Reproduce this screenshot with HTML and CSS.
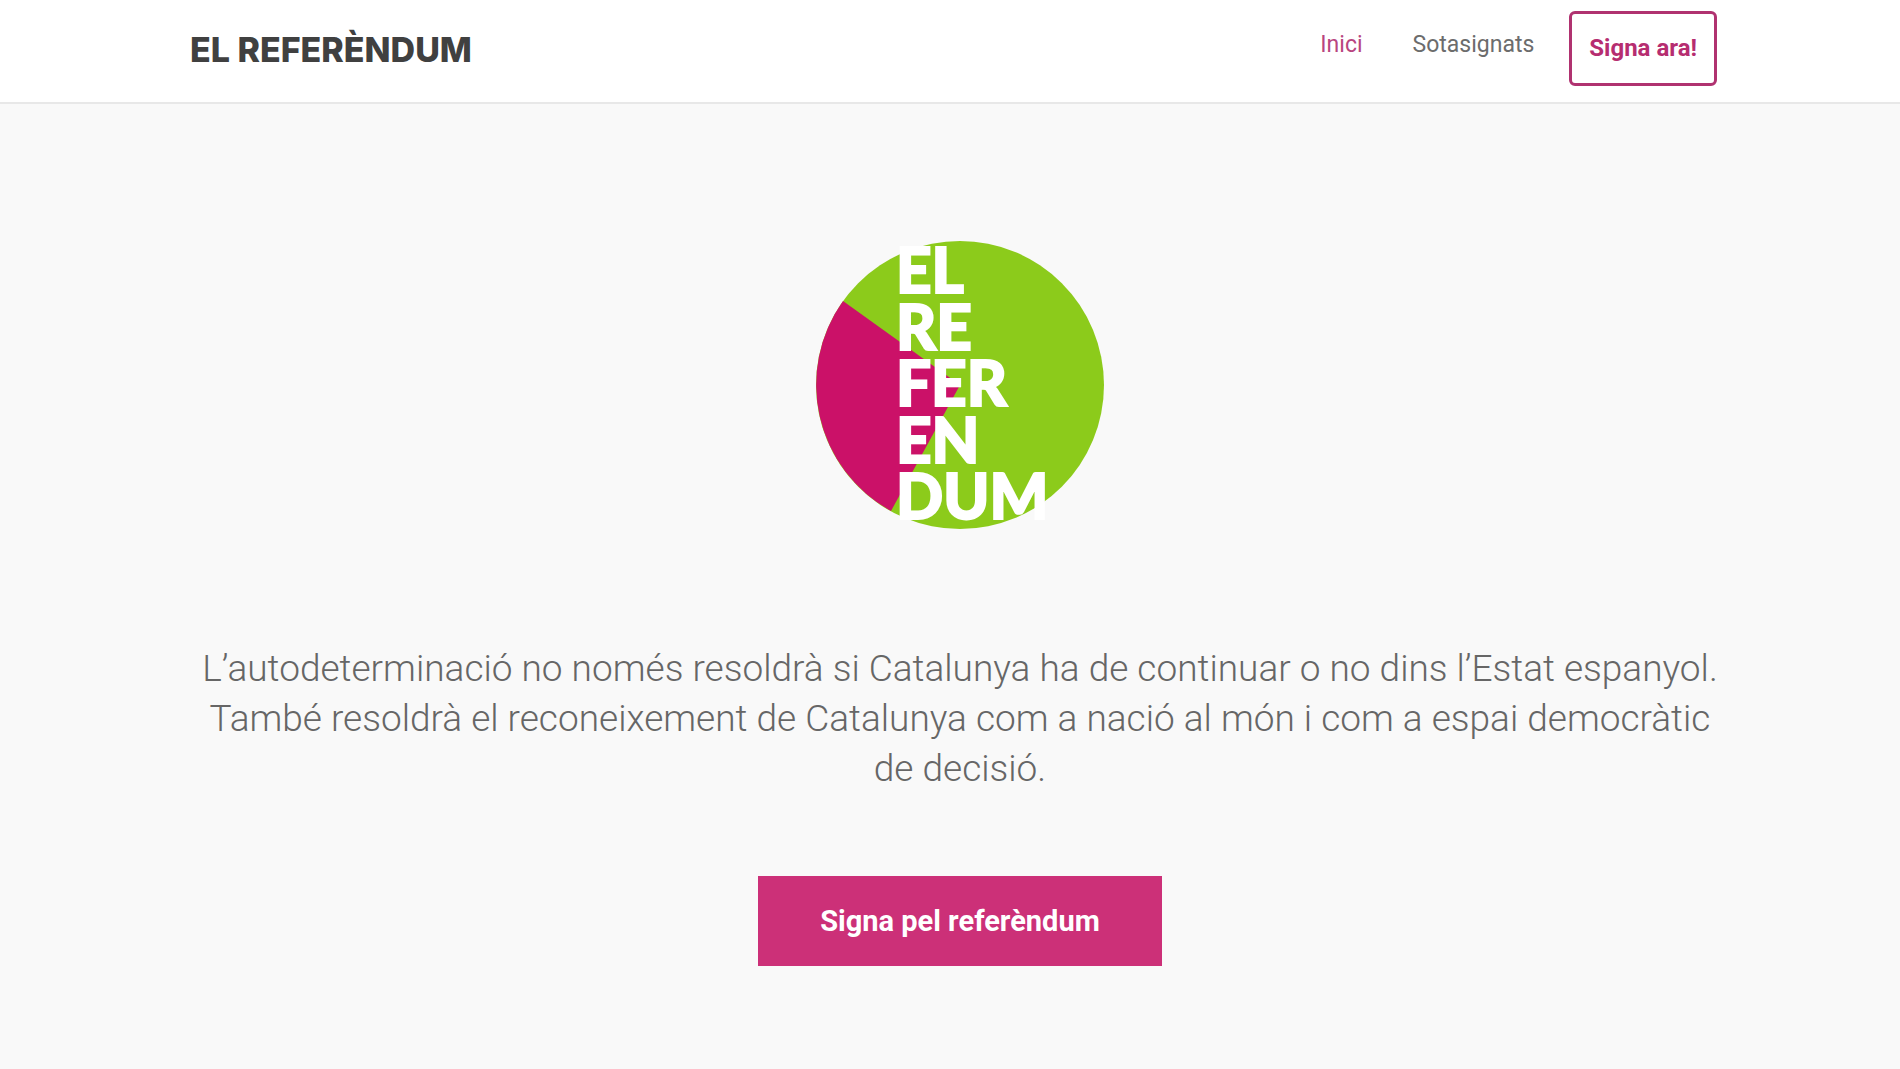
FILE: index.html
```html
<!DOCTYPE html>
<html lang="ca">
<head>
    <meta charset="UTF-8">
    <meta name="viewport" content="width=device-width, initial-scale=1.0">
    <title>El Referèndum</title>
    <link rel="stylesheet" href="styles.css">
</head>
<body>
    <header class="header">
        <a class="brand" href="#">EL REFERÈNDUM</a>
        <nav class="nav">
            <a class="nav-link active" href="#">Inici</a>
            <a class="nav-link" href="#sotasignats">Sotasignats</a>
            <a class="nav-button" href="#signa">Signa ara!</a>
        </nav>
    </header>
    <main class="hero">
        <svg class="logo" viewBox="0 0 288 288" role="img" aria-label="El Referèndum">
            <circle cx="144" cy="144" r="144" fill="#8ccb1b"/>
            <path d="M144 144 L27 60 A144 144 0 0 0 75 270 Z" fill="#cb1168"/>
            <g class="logo-text">
                <text x="80" y="52">EL</text>
                <text x="80" y="109">RE</text>
                <text x="80" y="165">FER</text>
                <text x="80" y="222">EN</text>
                <text x="80" y="278">DUM</text>
            </g>
        </svg>
        <p class="lead">L’autodeterminació no només resoldrà si Catalunya ha de continuar o no dins l’Estat espanyol. També resoldrà el reconeixement de Catalunya com a nació al món i com a espai democràtic de decisió.</p>
        <button class="sign-button" type="button">Signa pel referèndum</button>
    </main>
</body>
</html>
```
FILE: styles.css
```css
* { box-sizing: border-box; }
body { margin: 0; min-height: 100vh; background: #f9f9f9; color: #666; font-family: Roboto, "Liberation Sans", sans-serif; }
a { text-decoration: none; }

.header { display: flex; justify-content: space-between; align-items: flex-start; padding: 11px 183px 16px 190px; background: #fff; border-bottom: 2px solid #e8e8e8; }
.brand { padding-top: 19px; color: #404040; font-family: Inter, sans-serif; font-size: 34px; line-height: 40px; font-weight: 800; }
.nav { display: flex; align-items: flex-start; }
.nav-link { margin-right: 50px; padding-top: 19px; color: #6c6c6c; font-size: 23px; line-height: 30px; }
.nav-link + .nav-button { margin-left: -15px; }
.nav-link.active { color: #b9457f; }
.nav-button { padding: 19px 17px 20px; border: 3px solid #b03270; border-radius: 6px; color: #b62d70; font-size: 24px; line-height: 30px; font-weight: 700; }

.hero { display: flex; flex-direction: column; align-items: center; padding: 137px 170px 100px 190px; }
.logo { width: 288px; height: 288px; overflow: visible; }
.logo-text { fill: #fff; stroke: #fff; stroke-width: 2px; font-family: Lato, sans-serif; font-size: 62px; font-weight: 900; }
.lead { margin: 115px 0 82px; font-size: 37px; line-height: 50px; font-weight: 300; text-align: center; }
.sign-button { padding: 25px 62px; border: 0; background: #cc3078; color: #fff; font-family: inherit; font-size: 29px; line-height: 40px; font-weight: 700; cursor: pointer; }
```
